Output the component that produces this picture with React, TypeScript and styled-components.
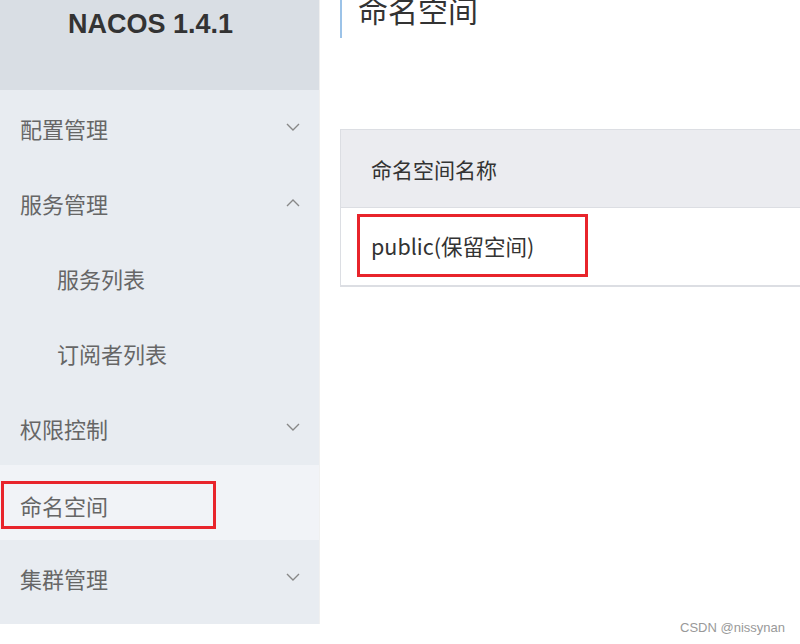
import React from "react";
import styled, { createGlobalStyle } from "styled-components";

const GlobalStyle = createGlobalStyle`
  html, body {
    margin: 0;
    padding: 0;
    background: #fff;
  }
  body {
    font-family: "Noto Sans CJK SC", "Liberation Sans", sans-serif;
  }
`;

const StylePage = styled.div`
  position: relative;
  display: flex;
  width: 800px;
  height: 644px;
  overflow: hidden;
  background: #fff;
`;

const StyleSidebar = styled.div`
  width: 320px;
  flex: none;
  align-self: flex-start;
  display: flex;
  flex-direction: column;
  border-right: 1px solid #f0f0f0;
  box-sizing: border-box;
`;

const StyleLogo = styled.div`
  height: 90px;
  background-color: #d9dee4;
  padding: 8px 0 0 68px;
  box-sizing: border-box;
  font-family: "Liberation Sans", Arial, sans-serif;
  font-weight: bold;
  font-size: 27px;
  line-height: 32px;
  color: #333;
`;

const StyleMenu = styled.div`
  background-color: #e8ecf1;
  padding-bottom: 9px;
`;

const StyleMenuItem = styled.div<{ $sub?: boolean; $active?: boolean }>`
  height: 75px;
  display: flex;
  align-items: center;
  justify-content: space-between;
  padding: 0 19px 0 ${(p) => (p.$sub ? "57px" : p.$active ? "1px" : "20px")};
  background-color: ${(p) => (p.$active ? "#f1f3f7" : "transparent")};
  font-size: 22px;
  color: #666;
`;

const StyleMarked = styled.span`
  display: inline-flex;
  align-items: center;
  width: 215px;
  height: 48px;
  box-sizing: border-box;
  border: 3px solid #e8242b;
  padding-left: 16px;
  margin-top: 5px;
`;

const StyleMain = styled.div`
  flex: 1;
  padding-left: 20px;
`;

const StyleTitle = styled.div`
  height: 38px;
  box-sizing: border-box;
  border-left: 2px solid #9cc3e8;
  padding-left: 16px;
  font-size: 30px;
  line-height: 18px;
  color: #333;
`;

const StyleTable = styled.div`
  margin-top: 91px;
  width: 520px;
  border: 1px solid #dcdee3;
  border-bottom-width: 2px;
`;

const StyleHeadCell = styled.div`
  height: 77px;
  display: flex;
  align-items: center;
  padding-left: 30px;
  background-color: #ebecf0;
  border-bottom: 1px solid #dcdee3;
  font-size: 21px;
  color: #333;
`;

const StyleCell = styled.div`
  height: 77px;
  display: flex;
  align-items: center;
  padding-left: 16px;
  font-size: 21.5px;
  color: #333;
`;

const StyleCellMark = styled.span`
  display: inline-flex;
  align-items: center;
  height: 63px;
  box-sizing: border-box;
  border: 3px solid #e8242b;
  padding: 0 51px 0 11px;
  margin-top: -2px;
`;

const StyleWatermark = styled.div`
  position: absolute;
  right: 15px;
  bottom: 9px;
  font-family: "Liberation Sans", Arial, sans-serif;
  font-size: 13px;
  color: #999;
`;

const Chevron = ({ up }: { up?: boolean }) => (
  <svg width="14" height="9" viewBox="0 0 14 9">
    <path
      d={up ? "M1 8 L7 2 L13 8" : "M1 1 L7 7 L13 1"}
      fill="none"
      stroke="#888"
      strokeWidth="1.4"
    />
  </svg>
);

const menu = [
  { label: "配置管理", chevron: "down" },
  { label: "服务管理", chevron: "up" },
  { label: "服务列表", sub: true },
  { label: "订阅者列表", sub: true },
  { label: "权限控制", chevron: "down" },
  { label: "命名空间", active: true },
  { label: "集群管理", chevron: "down" },
];

const App = () => {
  return (
    <StylePage>
      <GlobalStyle />
      <StyleSidebar>
        <StyleLogo>NACOS 1.4.1</StyleLogo>
        <StyleMenu>
          {menu.map((item) => (
            <StyleMenuItem key={item.label} $sub={item.sub} $active={item.active}>
              {item.active ? <StyleMarked>{item.label}</StyleMarked> : <span>{item.label}</span>}
              {item.chevron && <Chevron up={item.chevron === "up"} />}
            </StyleMenuItem>
          ))}
        </StyleMenu>
      </StyleSidebar>
      <StyleMain>
        <StyleTitle>命名空间</StyleTitle>
        <StyleTable>
          <StyleHeadCell>命名空间名称</StyleHeadCell>
          <StyleCell>
            <StyleCellMark>public(保留空间)</StyleCellMark>
          </StyleCell>
        </StyleTable>
      </StyleMain>
      <StyleWatermark>CSDN @nissynan</StyleWatermark>
    </StylePage>
  );
};

export default App;
